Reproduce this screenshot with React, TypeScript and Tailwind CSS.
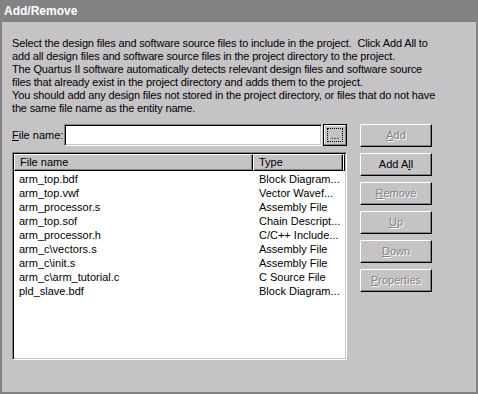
import type { ReactNode } from "react";

const files: [string, string][] = [
  ["arm_top.bdf", "Block Diagram..."],
  ["arm_top.vwf", "Vector Wavef..."],
  ["arm_processor.s", "Assembly File"],
  ["arm_top.sof", "Chain Descript..."],
  ["arm_processor.h", "C/C++ Include..."],
  ["arm_c\\vectors.s", "Assembly File"],
  ["arm_c\\init.s", "Assembly File"],
  ["arm_c\\arm_tutorial.c", "C Source File"],
  ["pld_slave.bdf", "Block Diagram..."],
];

const raised =
  "border-t border-l border-t-white border-l-white border-r border-b border-r-black border-b-black shadow-[inset_-1px_-1px_0_#848284]";
const sunken =
  "border-t border-l border-t-[#848284] border-l-[#848284] border-r border-b border-r-white border-b-white shadow-[inset_1px_1px_0_#000,inset_-1px_-1px_0_#c6c3c6]";

function WinButton({
  children,
  disabled,
}: {
  children: ReactNode;
  disabled?: boolean;
}) {
  return (
    <div
      className={`flex h-[23px] w-[72px] items-center justify-center bg-[#c6c3c6] ${raised} ${
        disabled
          ? "text-[#848284] [text-shadow:1px_1px_0_#fff]"
          : "text-black"
      }`}
    >
      {children}
    </div>
  );
}

function HeaderCell({ label, width }: { label: string; width: string }) {
  return (
    <div className={`flex h-[17px] items-center pl-[5px] ${width} ${raised}`}>
      {label}
    </div>
  );
}

export default function App() {
  return (
    <div className="flex h-[394px] w-[478px] flex-col bg-[#848284] font-['Liberation_Sans',Arial,sans-serif] text-[11px] leading-[13px] text-black">
      <div className="flex h-[22px] items-center px-[4px] text-[12px] font-bold text-white">
        Add/Remove
      </div>
      <div className="mx-[2px] mb-[2px] flex-1 bg-[#c6c3c6] pl-[10px] pt-[15px]">
        <div className="flex flex-col tracking-[-0.15px]">
          <span>
            Select the design files and software source files to include in the project.&nbsp; Click Add All to
          </span>
          <span>add all design files and software source files in the project directory to the project.</span>
          <span>The Quartus II software automatically detects relevant design files and software source</span>
          <span>files that already exist in the project directory and adds them to the project.</span>
          <span>You should add any design files not stored in the project directory, or files that do not have</span>
          <span>the same file name as the entity name.</span>
        </div>

        <div className="mt-[9px] flex gap-[13px]">
          <div className="flex w-[335px] flex-col gap-[6px]">
            <div className="flex h-[22px] items-center">
              <span className="w-[52px]">
                <u>F</u>ile name:
              </span>
              <div className={`h-[22px] w-[258px] bg-white ${sunken}`} />
              <div className="ml-[1px] flex h-[22px] w-[24px] items-center justify-center border border-black bg-[#c6c3c6]">
                <div className="flex h-[20px] w-[22px] items-center justify-center border-t border-l border-white border-r-[#848284] border-b-[#848284] border-r border-b">
                  <div className="flex h-[14px] w-[16px] items-end justify-center border border-dotted border-black pb-[1px] text-[10px] leading-[8px]">
                    ...
                  </div>
                </div>
              </div>
            </div>

            <div className={`flex h-[208px] flex-col bg-white p-[1px] ${sunken}`}>
              <div className="flex bg-[#c6c3c6]">
                <HeaderCell label="File name" width="w-[239px]" />
                <HeaderCell label="Type" width="w-[90px]" />
                <div className={`h-[17px] flex-1 ${raised}`} />
              </div>
              <div className="flex flex-col pt-[1px]">
                {files.map(([name, type]) => (
                  <div key={name} className="flex h-[14px] items-center">
                    <span className="w-[245px] pl-[5px]">{name}</span>
                    <span>{type}</span>
                  </div>
                ))}
              </div>
            </div>
          </div>

          <div className="flex flex-col gap-[6px]">
            <WinButton disabled>
              <u>A</u>dd
            </WinButton>
            <WinButton>
              Add A<u>l</u>l
            </WinButton>
            <WinButton disabled>
              <u>R</u>emove
            </WinButton>
            <WinButton disabled>
              <u>U</u>p
            </WinButton>
            <WinButton disabled>
              <u>D</u>own
            </WinButton>
            <WinButton disabled>
              <u>P</u>roperties
            </WinButton>
          </div>
        </div>
      </div>
    </div>
  );
}
